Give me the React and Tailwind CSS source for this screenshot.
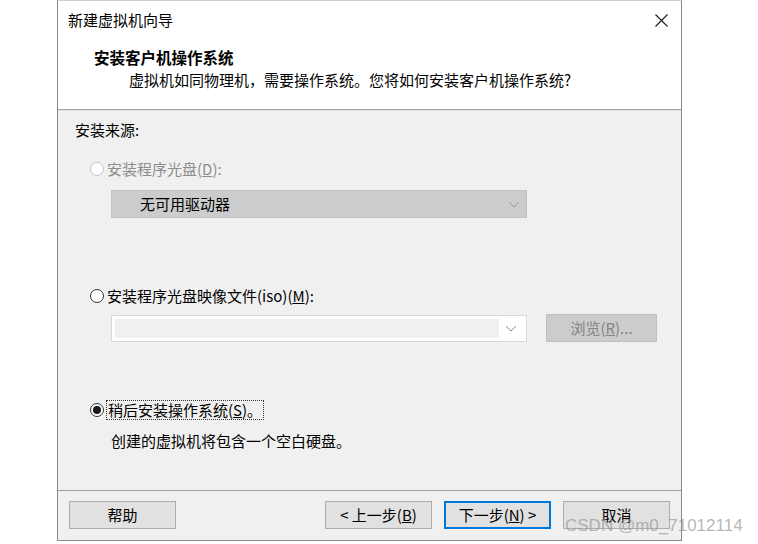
import React from "react";

const font = { fontFamily: '"Noto Sans CJK SC", "Noto Sans", sans-serif' };

function Radio({ checked, disabled }) {
  return (
    <span
      className={`flex h-[14px] w-[14px] shrink-0 items-center justify-center rounded-full border bg-white ${
        disabled ? "border-[#c4c4c4]" : "border-[#333333]"
      }`}
    >
      {checked && <span className="h-[8px] w-[8px] rounded-full bg-[#1a1a1a]" />}
    </span>
  );
}

function Chevron({ color }) {
  return (
    <svg width="12" height="7" viewBox="0 0 12 7" fill="none">
      <path d="M1 1 L6 6 L11 1" stroke={color} strokeWidth="1" />
    </svg>
  );
}

function Btn({ children, primary }) {
  return (
    <div
      className={`flex h-[28px] w-[107px] items-center justify-center bg-[#e1e1e1] text-[15px] text-black ${
        primary ? "border-2 border-[#0078d7]" : "border border-[#adadad]"
      }`}
    >
      {children}
    </div>
  );
}

export default function App() {
  return (
    <div className="relative h-[544px] w-[758px] bg-white" style={font}>
      <div className="ml-[57px] flex h-[541px] w-[625px] flex-col border border-[#8a8a8a] border-t-[#cfcfcf]">
        {/* header */}
        <div className="relative h-[108px] bg-white">
          <div className="flex h-[38px] items-center justify-between pl-[10px] pr-[13px]">
            <span className="text-[15px] leading-5 text-black">新建虚拟机向导</span>
            <svg width="13" height="13" viewBox="0 0 13 13">
              <path d="M0.5 0.5 L12.5 12.5 M12.5 0.5 L0.5 12.5" stroke="#222" strokeWidth="1.2" />
            </svg>
          </div>
          <div className="mt-[8px] pl-[36px] text-[15.5px] font-bold leading-5 text-black">安装客户机操作系统</div>
          <div className="mt-[3px] pl-[71px] text-[15px] leading-5 text-black">
            虚拟机如同物理机，需要操作系统。您将如何安装客户机操作系统?
          </div>
        </div>
        <div className="h-px bg-[#a0a0a0]" />
        <div className="h-px bg-[#e3e3e3]" />
        {/* content */}
        <div className="flex flex-1 flex-col bg-[#f0f0f0] pl-[17px] pt-[9px] text-[15px] leading-5 text-black">
          <div>安装来源:</div>
          <div className="mt-[19px] flex items-center gap-[3px] pl-[15px] text-[#8d8d8d]">
            <Radio disabled />
            <span>
              安装程序光盘(<span className="underline">D</span>):
            </span>
          </div>
          <div className="ml-[36px] mt-[11px] flex h-[28px] w-[416px] items-center justify-between border border-[#c2c2c2] bg-[#cccccc] pl-[28px] pr-[6px]">
            <span className="text-black">无可用驱动器</span>
            <Chevron color="#9a9a9a" />
          </div>
          <div className="mt-[68px] flex items-center gap-[3px] pl-[15px]">
            <Radio />
            <span>
              安装程序光盘映像文件(iso)(<span className="underline">M</span>):
            </span>
          </div>
          <div className="mt-[9px] flex items-start">
            <div className="ml-[36px] flex h-[27px] w-[416px] items-center border border-[#d9d9d9] bg-white p-[3px]">
              <div className="h-full flex-1 bg-[#f0f0f0]" />
              <div className="flex w-[24px] justify-center">
                <Chevron color="#8a8a8a" />
              </div>
            </div>
            <div className="ml-[19px] mt-[-1px] flex h-[28px] w-[111px] items-center justify-center border border-[#bfbfbf] bg-[#cccccc] text-[#838383]">
              浏览(<span className="underline">R</span>)...
            </div>
          </div>
          <div className="mt-[58px] flex items-center gap-[2px] pl-[15px]">
            <Radio checked />
            <span className="border border-dotted border-[#333] px-[1px] leading-[18px]">
              稍后安装操作系统(<span className="underline">S</span>)。
            </span>
          </div>
          <div className="mt-[11px] pl-[36px]">创建的虚拟机将包含一个空白硬盘。</div>
        </div>
        <div className="h-px bg-[#a0a0a0]" />
        {/* footer */}
        <div className="flex h-[49px] items-start bg-[#f0f0f0] pl-[11px] pt-[10px] text-[15px]">
          <Btn>帮助</Btn>
          <div className="ml-[149px] flex gap-[12px]">
            <Btn>
              &lt; 上一步(<span className="underline">B</span>)
            </Btn>
            <Btn primary>
              下一步(<span className="underline">N</span>) &gt;
            </Btn>
            <Btn>取消</Btn>
          </div>
        </div>
      </div>
      <div
        className="absolute left-[565px] top-[514px] text-[17px] leading-6 text-[rgba(150,150,150,0.7)]"
        style={{ fontFamily: '"Liberation Sans", Arial, sans-serif' }}
      >
        CSDN @m0_71012114
      </div>
    </div>
  );
}
